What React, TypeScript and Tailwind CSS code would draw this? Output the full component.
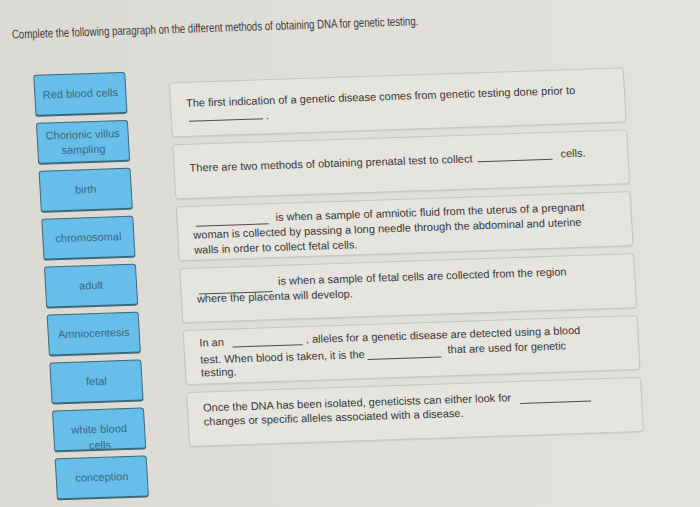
import React from "react";

function Blank({ cls }: { cls: string }) {
  return <span className={"inline-block h-[10px] border-b border-[#4d4d4d] " + cls} />;
}

function Chip({ children, cls = "" }: { children: React.ReactNode; cls?: string }) {
  return (
    <div
      className={
        "h-[42px] w-[92px] shrink-0 overflow-hidden rounded-[3px] border border-b-2 border-[#40687c] bg-[#66bee9] text-center text-[11px] leading-[15px] text-[#3a6884] " +
        cls
      }
    >
      {children}
    </div>
  );
}

function Box({ children, cls }: { children: React.ReactNode; cls: string }) {
  return (
    <div
      className={
        "h-[55px] w-[455px] rounded-[4px] border border-[#c9c6c0] bg-[#e6e4df] pl-[15px] text-[11px] text-[#363636] shadow-[0_1px_1px_rgba(0,0,0,0.07)] " +
        cls
      }
    >
      {children}
    </div>
  );
}

function Line({ children, cls = "h-[15px] leading-[15px]" }: { children: React.ReactNode; cls?: string }) {
  return <div className={"whitespace-nowrap " + cls}>{children}</div>;
}

export default function App() {
  return (
    <div className="h-[507px] w-[700px] overflow-hidden bg-gradient-to-r from-[#dbd9d4] via-[#e1dfda] to-[#e3e1dc] font-['Liberation_Sans',Arial,sans-serif]">
      <div className="h-[507px] w-[700px] origin-top-left [transform:rotate(-1.9deg)_skewX(1.3deg)]">
        <div className="pl-[10px] pt-[27px]">
          <div className="h-[16px] whitespace-nowrap text-[12.5px] leading-[16px] text-[#3b3b3b]">
            <span className="inline-block origin-left scale-x-[0.77]">
              Complete the following paragraph on the different methods of obtaining DNA for genetic testing.
            </span>
          </div>
        </div>

        <div className="mt-[33px] flex items-start pl-[29px]">
          <div className="flex w-[92px] flex-col gap-[6px]">
            <Chip cls="flex items-center justify-center">Red blood cells</Chip>
            <Chip cls="flex items-center justify-center">
              <div>
                Chorionic villus
                <br />
                sampling
              </div>
            </Chip>
            <Chip cls="flex items-center justify-center">birth</Chip>
            <Chip cls="flex items-center justify-center">chromosomal</Chip>
            <Chip cls="flex items-center justify-center">adult</Chip>
            <Chip cls="flex items-center justify-center">Amniocentesis</Chip>
            <Chip cls="flex items-center justify-center">fetal</Chip>
            <Chip cls="pt-[12px]">
              <div className="h-[15px]">white blood</div>
              <div className="mt-[1px] h-[15px]">cells</div>
            </Chip>
            <Chip cls="flex items-center justify-center">conception</Chip>
          </div>

          <div className="ml-[43px] mt-[12px] flex flex-col gap-[7px]">
            <Box cls="pt-[13px]">
              <Line>The first indication of a genetic disease comes from genetic testing done prior to</Line>
              <Line>
                <Blank cls="ml-[2px] w-[74px]" /> .
              </Line>
            </Box>

            <Box cls="pt-[14px]">
              <Line>
                There are two methods of obtaining prenatal test to collect
                <Blank cls="ml-[5px] mr-[8px] w-[75px]" />
                <span className="align-[2px]">cells.</span>
              </Line>
            </Box>

            <Box cls="pt-[6px]">
              <Line>
                <Blank cls="ml-[3px] mr-[7px] w-[73px] align-[-3px]" />
                is when a sample of amniotic fluid from the uterus of a pregnant
              </Line>
              <Line>woman is collected by passing a long needle through the abdominal and uterine</Line>
              <Line>walls in order to collect fetal cells.</Line>
            </Box>

            <Box cls="pt-[8px]">
              <Line>
                <Blank cls="ml-[2px] mr-[6px] w-[74px] align-[-7px]" />
                is when a sample of fetal cells are collected from the region
              </Line>
              <Line>where the placenta will develop.</Line>
            </Box>

            <Box cls="pt-[5px]">
              <Line>
                In an
                <Blank cls="ml-[9px] mr-[3px] w-[70px] align-[-2px]" />, alleles for a genetic disease are detected using a blood
              </Line>
              <Line>
                test. When blood is taken, it is the
                <Blank cls="ml-[3px] mr-[6px] w-[74px] align-[-2px]" />
                <span className="align-[2px]">that are used for genetic</span>
              </Line>
              <Line>testing.</Line>
            </Box>

            <Box cls="pt-[8px]">
              <Line cls="h-[14px] leading-[14px]">
                Once the DNA has been isolated, geneticists can either look for
                <Blank cls="ml-[9px] w-[71px] align-[-3px]" />
              </Line>
              <Line cls="h-[14px] leading-[14px]">changes or specific alleles associated with a disease.</Line>
            </Box>
          </div>
        </div>
      </div>
    </div>
  );
}
